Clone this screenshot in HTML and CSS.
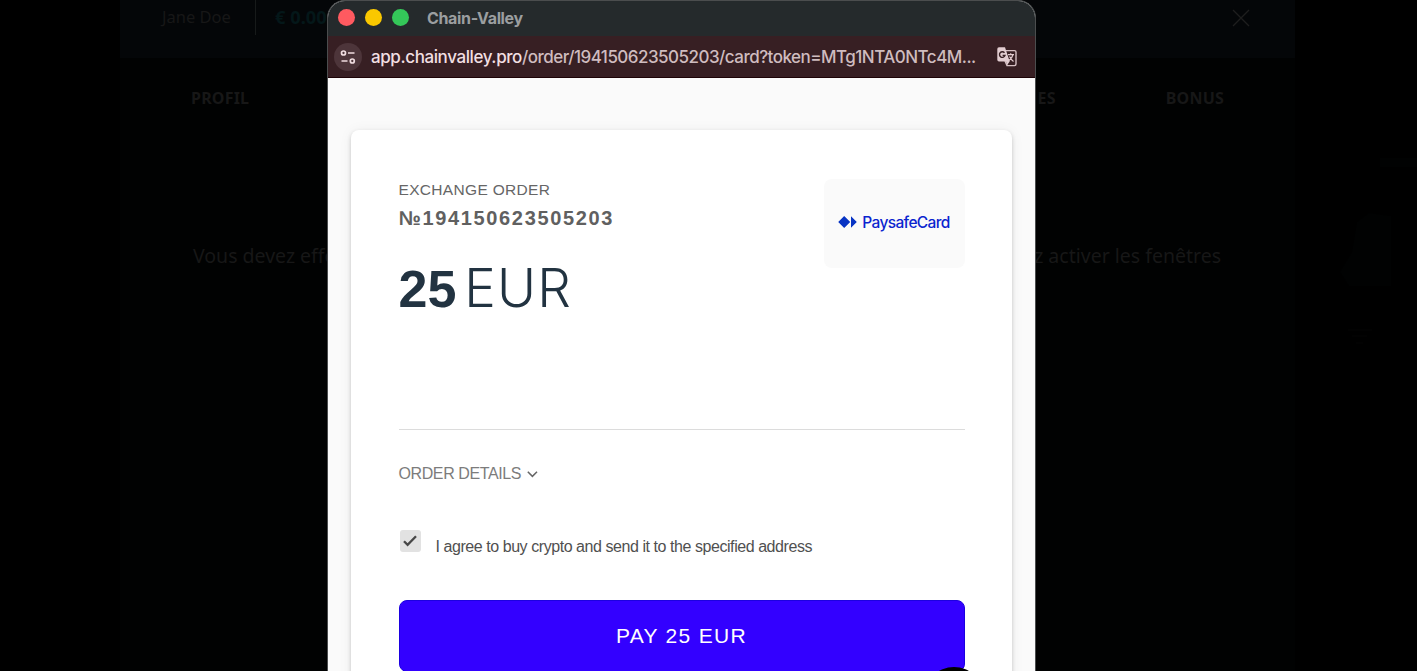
FILE: index.html
```html
<!DOCTYPE html>
<html lang="fr">
<head>
    <meta charset="UTF-8">
    <meta name="viewport" content="width=device-width, initial-scale=1.0">
    <title>Chain-Valley</title>
    <link rel="stylesheet" href="styles.css">
</head>
<body>
    <!-- Dimmed page behind the payment window -->
    <div class="page">
        <aside class="sidebar"></aside>
        <main class="account">
            <header class="account-header">
                <span class="user">Jane Doe</span>
                <span class="balance">€ 0.00</span>
                <svg class="close" width="18" height="18" viewBox="0 0 18 18"><path d="M1 1l16 16M17 1L1 17"/></svg>
            </header>
            <nav class="tabs">
                <span class="tab">PROFIL</span>
                <span class="tab tab-cut">ES</span>
                <span class="tab">BONUS</span>
            </nav>
            <div class="notice">
                <span>Vous devez effe</span>
                <span>ez activer les fenêtres</span>
            </div>
        </main>
        <aside class="art">
            <svg width="122" height="671" viewBox="0 0 122 671">
                <path class="art-shape" d="M62 222l12-9 22 3v70H54l-9-14 12-20zM85 158h38v9H85z"/>
                <path class="art-line" d="M53 330h24M57 336h15M61 343h7"/>
            </svg>
        </aside>
    </div>

    <!-- Payment window -->
    <div class="window">
        <div class="title-bar">
            <i class="dot red"></i>
            <i class="dot yellow"></i>
            <i class="dot green"></i>
            <span class="title">Chain-Valley</span>
        </div>
        <div class="url-bar">
            <span class="site-info">
                <svg width="16" height="16" viewBox="0 0 16 16"><circle cx="3.5" cy="4" r="2"/><path d="M8 4h6.5M1.5 12h6"/><circle cx="12.3" cy="12" r="2"/></svg>
            </span>
            <span class="url"><b>app.chainvalley.pro</b>/order/194150623505203/card?token=MTg1NTA0NTc4M...</span>
            <svg class="translate" width="20" height="20" viewBox="0 0 20 20">
                <path class="tr-back" d="M9 3.600h8.500a1.500 1.500 0 0 1 1.500 1.500v12a1.500 1.500 0 0 1-1.500 1.500H10L8 14"/>
                <path class="tr-front" d="M2 .3h6l4.700 14.200H2A1.700 1.700 0 0 1 .3 12.800V2A1.700 1.700 0 0 1 2 .3zM9 14.500h3.700L10 18.300z"/>
                <path class="tr-g" d="M7.500 5.800A2.800 2.800 0 1 0 8 8.400H5.600"/>
                <path class="tr-x" d="M11 7.700h6M13.700 6.200v1.500M16 7.700c-.5 2.500-2 4.200-4 5.800M12.500 9.500c1 2 2.300 3.700 4 5"/>
            </svg>
        </div>
        <div class="content">
            <div class="card">
                <div class="order">
                    <div>
                        <div class="order-label">EXCHANGE ORDER</div>
                        <div class="order-number">№194150623505203</div>
                        <div class="amount"><b>25</b><span>EUR</span></div>
                    </div>
                    <div class="method">
                        <svg width="19" height="12" viewBox="0 0 19 12"><path d="M6.200 0l6 6-6 6-6-6zM13 .2L18.800 6 13 11.800z"/></svg>
                        <span>PaysafeCard</span>
                    </div>
                </div>
                <div class="details">
                    <span>ORDER DETAILS</span>
                    <svg width="11" height="7" viewBox="0 0 11 7"><path d="M.8.8l4.600 4.600L10 .8"/></svg>
                </div>
                <div class="agree">
                    <span class="checkbox">
                        <svg width="14" height="12" viewBox="0 0 14 12"><path d="M1 6.300l3.600 3.600L13 1.300"/></svg>
                    </span>
                    <span class="agree-text">I agree to buy crypto and send it to the specified address</span>
                </div>
                <button type="button" class="pay">PAY 25 EUR</button>
            </div>
        </div>
        <div class="chat"></div>
    </div>
</body>
</html>
```
FILE: styles.css
```css
* {
    box-sizing: border-box;
}
body {
    margin: 0;
    height: 671px;
    overflow: hidden;
    position: relative;
    background: #000;
    font-family: "Liberation Sans", Arial, sans-serif;
}
svg {
    display: block;
    fill: none;
    flex-shrink: 0;
}

/* Dimmed page */
.page {
    display: grid;
    grid-template-columns: 120px 1175px 122px;
    height: 671px;
    font-family: "Noto Sans", sans-serif;
    color: #171717;
}
.account {
    background: #010202;
}
.account-header {
    height: 58px;
    display: flex;
    align-items: flex-start;
    background: #040608;
}
.user {
    width: 136px;
    height: 35px;
    padding-left: 42px;
    border-right: 1px solid #171a1a;
    font-size: 16.5px;
    line-height: 34px;
}
.balance {
    margin-left: 19px;
    font-size: 18.3px;
    font-weight: bold;
    line-height: 34px;
    color: #041719;
}
.close {
    margin: 9px 45px 0 auto;
    stroke: #1e1e1e;
    stroke-width: 1.3;
}
.tabs {
    display: flex;
    height: 80px;
    padding: 0 71px;
    align-items: center;
    font-size: 16px;
    font-weight: bold;
    letter-spacing: 0.2px;
}
.tab-cut {
    margin: 0 110px 0 auto;
}
.notice {
    display: flex;
    justify-content: space-between;
    margin-top: 104px;
    padding: 0 74px 0 73px;
    font-size: 19.5px;
    line-height: 28px;
}
.art-shape {
    fill: #010202;
}
.art-line {
    stroke: #050505;
}

/* Payment window */
.window {
    position: absolute;
    left: 327px;
    top: 0;
    width: 709px;
    height: 671px;
    overflow: hidden;
    border: 1px solid #4b4d4e;
    border-bottom: 0;
    border-radius: 18px 18px 0 0;
    background: #fafafa;
}
.title-bar {
    height: 35px;
    display: flex;
    align-items: center;
    gap: 10px;
    padding: 0 0 2px 10px;
    background: #252a2c;
}
.dot {
    width: 17px;
    height: 17px;
    border-radius: 50%;
}
.red {
    background: #ff5a60;
}
.yellow {
    background: #fac800;
}
.green {
    background: #34c759;
}
.title {
    margin-left: 8px;
    font: bold 16px Inter, sans-serif;
    letter-spacing: -0.35px;
    color: #9b9ea0;
}
.url-bar {
    height: 42px;
    display: flex;
    align-items: center;
    padding: 0 18px 0 6px;
    background: #371f23;
    border-bottom: 1px solid #1d0306;
}
.site-info {
    width: 28px;
    height: 28px;
    border-radius: 50%;
    display: grid;
    place-items: center;
    flex-shrink: 0;
    background: #4d353a;
}
.site-info svg {
    stroke: #efdcdf;
    stroke-width: 1.7;
}
.url {
    margin-left: 9px;
    font: 500 17px Inter, sans-serif;
    letter-spacing: -0.52px;
    white-space: nowrap;
    color: #cfbcbf;
}
.url b {
    font-weight: 500;
    letter-spacing: -0.4px;
    color: #f1dfe2;
}
.translate {
    margin-left: auto;
}
.tr-back {
    stroke: #d5bfc3;
    stroke-width: 1.4;
}
.tr-front {
    fill: #e2ccd0;
}
.tr-g {
    stroke: #371f23;
    stroke-width: 1.4;
}
.tr-x {
    stroke: #e2ccd0;
    stroke-width: 1.2;
}
.content {
    padding: 52px 23px 0;
}
.card {
    height: 600px;
    padding: 49px 47.5px 0;
    border-radius: 8px;
    background: #fff;
    box-shadow: 0 2px 4px rgba(0, 0, 0, 0.18), 0 1px 14px rgba(0, 0, 0, 0.06);
}
.order {
    height: 251px;
    display: flex;
    justify-content: space-between;
    border-bottom: 1px solid #dcdcdc;
}
.order-label {
    margin-top: 1px;
    font-size: 15.5px;
    line-height: 20px;
    letter-spacing: 0.32px;
    color: #666;
}
.order-number {
    margin-top: 5px;
    font-size: 20px;
    font-weight: bold;
    line-height: 26px;
    letter-spacing: 1.65px;
    color: #606060;
}
.amount {
    display: flex;
    align-items: baseline;
    margin-top: 27px;
    font-size: 52px;
    line-height: 60px;
    color: #223341;
}
.amount span {
    margin-left: 8px;
    font-family: Inter, sans-serif;
    font-size: 53px;
    font-weight: 300;
    letter-spacing: 1.2px;
}
.method {
    width: 141px;
    height: 89px;
    display: flex;
    align-items: center;
    justify-content: center;
    gap: 5px;
    padding-bottom: 3px;
    border-radius: 8px;
    background: #fafafa;
    font-family: Inter, sans-serif;
    font-size: 15.5px;
    font-weight: 500;
    letter-spacing: -0.65px;
    color: #0a24cf;
}
.method svg {
    fill: #0834c4;
}
.details {
    display: flex;
    align-items: center;
    gap: 6px;
    margin-top: 34px;
    font-size: 16px;
    line-height: 20px;
    letter-spacing: -0.4px;
    color: #7c7c7c;
}
.details svg {
    stroke: #666;
    stroke-width: 1.5;
}
.agree {
    display: flex;
    align-items: flex-start;
    gap: 15px;
    margin-top: 46px;
    padding-left: 1px;
    color: #505050;
}
.checkbox {
    width: 21px;
    height: 22px;
    display: grid;
    place-items: center;
    border-radius: 3px;
    background: #e2e2e2;
}
.checkbox svg {
    stroke: #484848;
    stroke-width: 2.3;
}
.agree-text {
    margin-top: 7px;
    font-size: 16px;
    line-height: 20px;
    letter-spacing: -0.44px;
}
.pay {
    display: block;
    width: 100%;
    height: 72px;
    margin-top: 43px;
    padding: 0;
    border: 1px solid #1c00e0;
    border-radius: 8px;
    background: #3300ff;
    font-family: inherit;
    font-size: 21px;
    letter-spacing: 1.3px;
    color: #fff;
}
/* Floating chat bubble, only its top edge is in view */
.chat {
    position: absolute;
    left: 596px;
    top: 666px;
    width: 60px;
    height: 60px;
    border-radius: 50%;
    background: #000;
}
```
